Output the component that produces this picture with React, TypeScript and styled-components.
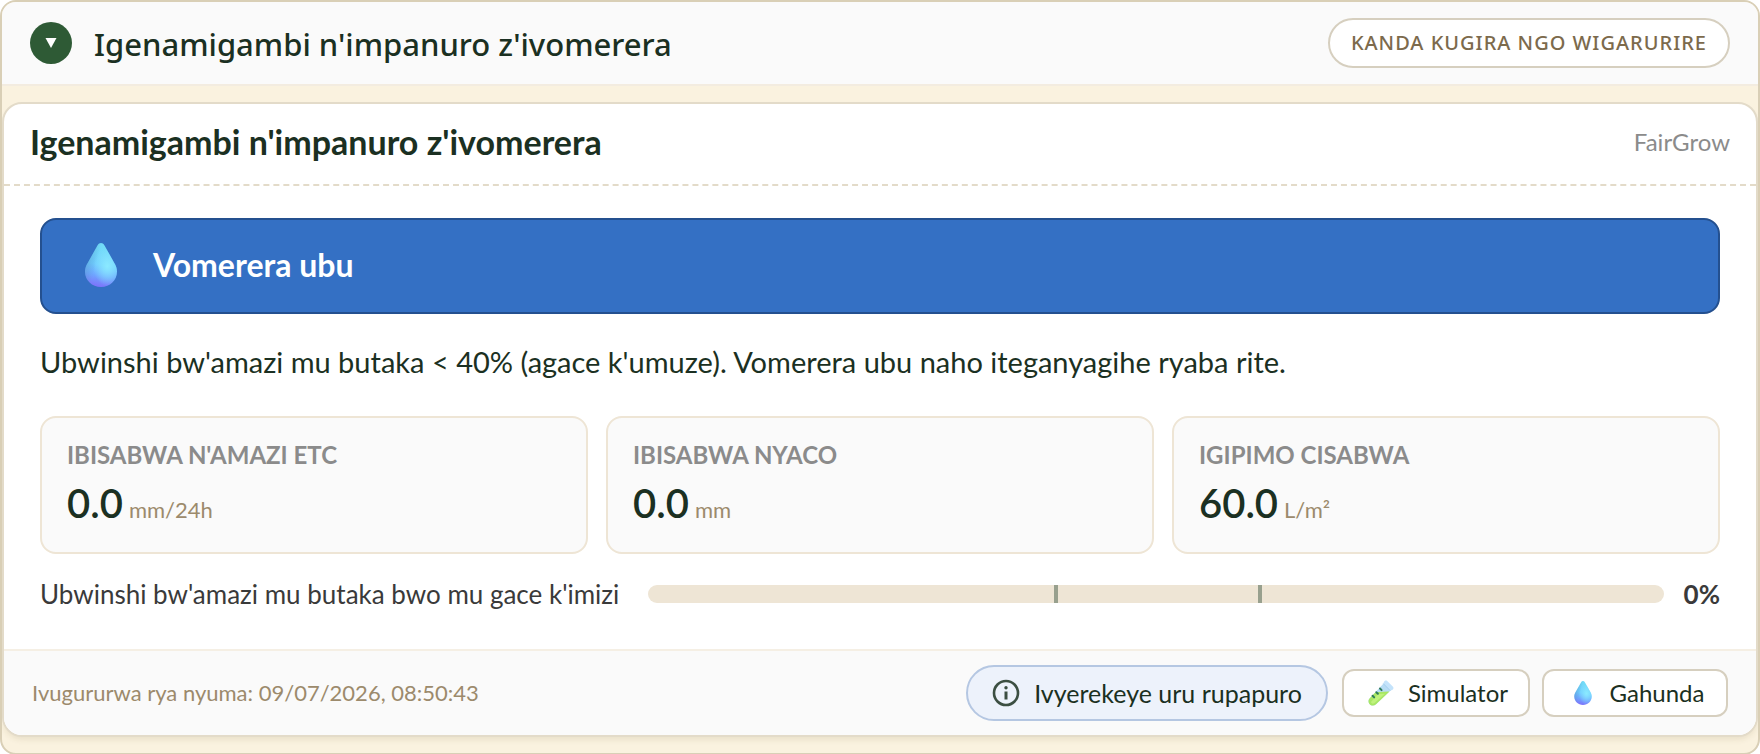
import React, { useId, useState } from "react";
import styled, { createGlobalStyle } from "styled-components";

const bodyFont = `Lato, "Liberation Sans", sans-serif`;
const uiFont = `"Noto Sans", "Liberation Sans", sans-serif`;
const ink = "#1b3022";

const GlobalStyle = createGlobalStyle`
  * { box-sizing: border-box; }
  body { margin: 0; background: #fff; color: ${ink}; font-family: ${bodyFont}; }
  h1, h2, h3, p, dl, dt, dd { margin: 0; }
  button { cursor: pointer; color: inherit; }
`;

const Panel = styled.section`
  border: 2px solid #d9cfb6;
  border-radius: 16px;
  background: #faf2df;
  overflow: hidden;
  padding-bottom: 16px;
`;

const PanelHeader = styled.header`
  display: flex;
  align-items: center;
  gap: 22px;
  min-height: 84px;
  padding: 0 28px;
  margin-bottom: 16px;
  background: #fafafa;
  border-bottom: 2px solid #f3ece0;
`;

const CollapseButton = styled.button`
  display: grid;
  place-items: center;
  width: 42px;
  height: 42px;
  padding: 0;
  border: 0;
  border-radius: 50%;
  background: #2e5a35;
`;

const PanelTitle = styled.h1`
  flex: 1;
  padding-top: 2px;
  font: 500 31px/40px ${uiFont};
`;

const RestorePill = styled.button`
  padding: 8px 21px;
  border: 2px solid #d6cfbf;
  border-radius: 25px;
  background: #fff;
  color: #7c6a4c;
  font: 500 20px/30px ${uiFont};
  letter-spacing: 1px;
`;

const Card = styled.article`
  border: 2px solid #e3dbc9;
  border-radius: 20px;
  background: #fff;
  overflow: hidden;
  box-shadow: 0 4px 6px -2px rgba(90, 70, 20, 0.12);
`;

const CardHeader = styled.header`
  display: flex;
  align-items: center;
  justify-content: space-between;
  height: 82px;
  padding: 0 26px 4px;
  border-bottom: 2px dashed #e3dbc9;
`;

const CardTitle = styled.h2`
  font-size: 34px;
  font-weight: 700;
  line-height: 40px;
`;

const Brand = styled.span`
  color: #8b8b8b;
  font-size: 24px;
  line-height: 32px;
`;

const CardBody = styled.div`
  display: flex;
  flex-direction: column;
  padding: 32px 36px 37px;
`;

const Banner = styled.div`
  display: flex;
  align-items: center;
  gap: 36px;
  height: 96px;
  padding: 0 43px 2px;
  border: 2px solid #24508f;
  border-radius: 16px;
  background: #3470c4;
  color: #fff;
`;

const BannerTitle = styled.h3`
  font-size: 32px;
  font-weight: 700;
  line-height: 40px;
`;

const Advice = styled.p`
  padding: 27px 0 33px;
  font-size: 29px;
  line-height: 42px;
`;

const Metrics = styled.dl`
  display: grid;
  grid-template-columns: repeat(3, 1fr);
  gap: 18px;
`;

const Metric = styled.div`
  height: 138px;
  padding: 21px 25px;
  border: 2px solid #eee5d5;
  border-radius: 16px;
  background: #fafafa;
`;

const MetricLabel = styled.dt`
  color: #8b8b8b;
  font-size: 24px;
  font-weight: 700;
  line-height: 32px;
`;

const MetricValue = styled.dd`
  display: flex;
  align-items: baseline;
  gap: 6px;
  padding-top: 8px;
  font-size: 40px;
  font-weight: 600;
  line-height: 48px;
`;

const Unit = styled.span`
  color: #9c8a6c;
  font-size: 22px;
  font-weight: 400;
`;

const MoistureRow = styled.div`
  display: flex;
  align-items: center;
  gap: 18px;
  padding-top: 22px;
  color: #3a3a3a;
  font-size: 26px;
  line-height: 36px;
`;

const MoistureLabel = styled.span`
  min-width: 590px;
`;

const Track = styled.div`
  position: relative;
  flex: 1;
  height: 18px;
  border-radius: 9px;
  background: #eee5d5;
  overflow: hidden;
`;

const Fill = styled.div`
  height: 100%;
  background: #3470c4;
`;

const Threshold = styled.span`
  position: absolute;
  top: 0;
  bottom: 0;
  width: 4px;
  background: #98a08e;
`;

const Percent = styled.strong`
  min-width: 38px;
  font-weight: 700;
  text-align: right;
`;

const CardFooter = styled.footer`
  display: flex;
  align-items: center;
  justify-content: space-between;
  padding: 14px 28px;
  border-top: 2px solid #f5efe4;
  background: #fafafa;
`;

const Updated = styled.span`
  color: #9c8a6c;
  font-size: 22px;
  line-height: 32px;
`;

const Actions = styled.div`
  display: flex;
  align-items: center;
  gap: 12px;
`;

const InfoButton = styled.button`
  display: flex;
  align-items: center;
  gap: 14px;
  height: 56px;
  margin-right: 2px;
  padding: 0 24px;
  border: 2px solid #b5c7e2;
  border-radius: 28px;
  background: #edf2fb;
  font: 400 25px/32px ${bodyFont};
`;

const ToolButton = styled.button`
  display: flex;
  align-items: center;
  justify-content: center;
  gap: 14px;
  min-width: 186px;
  height: 48px;
  padding: 0 20px 0 24px;
  border: 2px solid #d6cfbf;
  border-radius: 12px;
  background: #fff;
  font: 400 24px/32px ${bodyFont};
`;

function Droplet({ width, height }: { width: number; height: number }) {
  const id = useId();
  return (
    <svg width={width} height={height} viewBox="0 0 32 44" aria-hidden="true">
      <defs>
        <linearGradient id={id + "b"} x1="0.6" y1="0" x2="0.45" y2="1">
          <stop offset="0.1" stopColor="#72dbf8" />
          <stop offset="0.5" stopColor="#70ccff" />
          <stop offset="0.75" stopColor="#6fa5ff" />
          <stop offset="1" stopColor="#7d72fa" />
        </linearGradient>
        <radialGradient id={id + "g"} cx="0.7" cy="0.52" r="0.45">
          <stop offset="0" stopColor="#8beaff" />
          <stop offset="1" stopColor="#8beaff" stopOpacity="0" />
        </radialGradient>
        <linearGradient id={id + "s"} x1="0" y1="0.2" x2="0.4" y2="0.35">
          <stop offset="0.3" stopColor="#4d8fc0" stopOpacity="0.4" />
          <stop offset="1" stopColor="#4d8fc0" stopOpacity="0" />
        </linearGradient>
      </defs>
      {["b", "g", "s"].map((k) => (
        <path
          key={k}
          fill={`url(#${id}${k})`}
          d="M12.6 2.2C14.2-.6 17.8-.6 19.4 2.2L29 19.4C31 22.7 32 25.3 32 28.5C32 37.3 25 44 16 44S0 37.3 0 28.5C0 25.3 1 22.7 3 19.4Z"
        />
      ))}
    </svg>
  );
}

function TestTube() {
  return (
    <svg width="26" height="26" viewBox="0 0 26 26" aria-hidden="true">
      <path d="M15.5 3.5L22.5 10.5L8 24.2C5.8 26.2 3 25.6 1.5 23.9C0 22.1.2 19.7 2 17.9Z" fill="#b7dcf5" />
      <path d="M6.5 13.2L10 12L21.5 11.5L8 24.2C5.8 26.2 3 25.6 1.5 23.9C0 22.1.2 19.7 2 17.9Z" fill="#a9e765" />
      <path d="M10 14L17 13.8L6.5 23C5 24.2 3.5 23.8 3 22Z" fill="#bff27c" />
      <path d="M16 1.8C16.8.4 18.3.2 19.2 1L25 6.8C26 7.9 25.5 9.6 24 10L22.3 10.7L15.3 3.6Z" fill="#c4e3fb" />
      <path d="M15.3 3.6L22.3 10.7" stroke="#a3cdee" strokeWidth="1" />
      <path d="M12 8.500L13.600 10.100M8.300 12.200L9.900 13.800M4.600 15.800L6.200 17.400" stroke="#2f7a5a" strokeWidth="2" strokeLinecap="round" />
    </svg>
  );
}

function InfoIcon() {
  return (
    <svg width="28" height="28" viewBox="0 0 28 28" fill="none" aria-hidden="true">
      <circle cx="14" cy="14" r="12" stroke="#3c4f42" strokeWidth="2.6" />
      <path d="M14 12.5V20.5" stroke="#3c4f42" strokeWidth="3" />
      <circle cx="14" cy="8.8" r="1.7" fill="#3c4f42" />
    </svg>
  );
}

const metrics = [
  { label: "IBISABWA N'AMAZI ETC", value: "0.0", unit: "mm/24h" },
  { label: "IBISABWA NYACO", value: "0.0", unit: "mm" },
  { label: "IGIPIMO CISABWA", value: "60.0", unit: "L/m²" },
];
const thresholds = [40, 60];
const moisture = 0;

export default function App() {
  const [open, setOpen] = useState(true);
  const toggle = () => setOpen(!open);
  return (
    <>
      <GlobalStyle />
      <Panel>
        <PanelHeader>
          <CollapseButton type="button" aria-label="Wigarurire" aria-expanded={open} onClick={toggle}>
            <svg width="12" height="12" viewBox="0 0 12 12" aria-hidden="true">
              <path d="M.5 1H11.5L6 11Z" fill="#fff" />
            </svg>
          </CollapseButton>
          <PanelTitle>Igenamigambi n'impanuro z'ivomerera</PanelTitle>
          <RestorePill type="button" onClick={toggle}>KANDA KUGIRA NGO WIGARURIRE</RestorePill>
        </PanelHeader>
        {open && (
          <Card>
            <CardHeader>
              <CardTitle>Igenamigambi n'impanuro z'ivomerera</CardTitle>
              <Brand>FairGrow</Brand>
            </CardHeader>
            <CardBody>
              <Banner>
                <Droplet width={32} height={44} />
                <BannerTitle>Vomerera ubu</BannerTitle>
              </Banner>
              <Advice>
                Ubwinshi bw'amazi mu butaka &lt; 40% (agace k'umuze). Vomerera ubu naho iteganyagihe ryaba rite.
              </Advice>
              <Metrics>
                {metrics.map((m) => (
                  <Metric key={m.label}>
                    <MetricLabel>{m.label}</MetricLabel>
                    <MetricValue>
                      {m.value}
                      <Unit>{m.unit}</Unit>
                    </MetricValue>
                  </Metric>
                ))}
              </Metrics>
              <MoistureRow>
                <MoistureLabel id="moisture-label">Ubwinshi bw'amazi mu butaka bwo mu gace k'imizi</MoistureLabel>
                <Track role="meter" aria-labelledby="moisture-label" aria-valuemin={0} aria-valuemax={100} aria-valuenow={moisture}>
                  <Fill style={{ width: `${moisture}%` }} />
                  {thresholds.map((t) => (
                    <Threshold key={t} style={{ left: `${t}%` }} />
                  ))}
                </Track>
                <Percent>{moisture}%</Percent>
              </MoistureRow>
            </CardBody>
            <CardFooter>
              <Updated>Ivugururwa rya nyuma: 09/07/2026, 08:50:43</Updated>
              <Actions>
                <InfoButton type="button">
                  <InfoIcon />
                  Ivyerekeye uru rupapuro
                </InfoButton>
                <ToolButton type="button">
                  <TestTube />
                  Simulator
                </ToolButton>
                <ToolButton type="button">
                  <Droplet width={26} height={24} />
                  Gahunda
                </ToolButton>
              </Actions>
            </CardFooter>
          </Card>
        )}
      </Panel>
    </>
  );
}
